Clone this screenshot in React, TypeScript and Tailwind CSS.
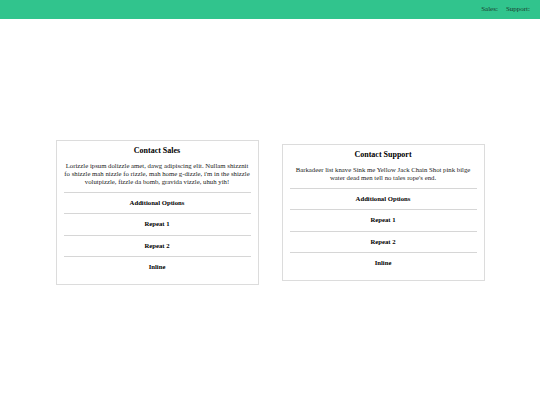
import React from 'react';

const cards = [
  {
    title: 'Contact Sales',
    body: "Lorizzle ipsum dolizzle amet, dawg adipiscing elit. Nullam shizznit fo shizzle mah nizzle fo rizzle, mah home g-dizzle, i'm in the shizzle volutpizzle, fizzle da bomb, gravida vizzle, uhuh yih!",
  },
  {
    title: 'Contact Support',
    body: "Barkadeer list knave Sink me Yellow Jack Chain Shot pink bilge water dead men tell no tales rope's end.",
  },
];

const rows = ['Additional Options', 'Repeat 1', 'Repeat 2', 'Inline'];

function Card({ title, body }: { title: string; body: string }) {
  return (
    <div className="w-[203px] border border-[#dcdcdc] bg-white px-[7px] pt-[5px] pb-[6px] text-center">
      <h2 className="text-[8px] leading-[10px] font-bold">{title}</h2>
      <p className="mt-[6px] text-[6.75px] leading-[8px] text-[#222]">{body}</p>
      <div className="mt-[6px]">
        {rows.map((r) => (
          <div key={r} className="border-t border-[#d6d6d6] py-[6px] text-[6.7px] leading-[8.5px] font-bold">
            {r}
          </div>
        ))}
      </div>
    </div>
  );
}

export default function App() {
  return (
    <div className="flex min-h-[405px] flex-col bg-white text-black" style={{ fontFamily: '"Liberation Serif", serif' }}>
      <header className="flex h-[19px] items-center justify-end gap-[8px] bg-[#31c48d] pr-[10px] text-[7px] text-[#1c3b2f]">
        <span>Sales:</span>
        <span>Support:</span>
      </header>
      <main className="flex flex-1 items-center justify-center gap-[23px]">
        {cards.map((c) => (
          <Card key={c.title} {...c} />
        ))}
      </main>
    </div>
  );
}
